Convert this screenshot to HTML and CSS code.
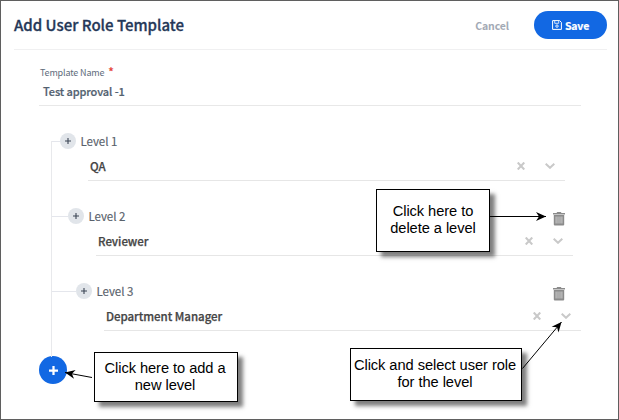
FILE: index.html
```html
<!DOCTYPE html>
<html lang="en">
<head>
<meta charset="utf-8">
<title>Add User Role Template</title>
<link rel="stylesheet" href="styles.css">
</head>
<body>
<svg class="sprite" aria-hidden="true">
  <symbol id="trash" viewBox="0 0 12 14"><path fill="#8b8b8b" d="M0 1h3.500l.7-1h3.600l.7 1H12v1.500H0z"/><path fill="#8b8b8b" d="M.8 3h10.400v9.500q0 1-1 1H1.800q-1 0-1-1z"/><path fill="#c4c4c4" d="M2.500 4.500h1.200v7H2.500zM4.400 4.500h1.200v7H4.400zM6.400 4.500h1.200v7H6.400zM8.300 4.500h1.200v7H8.300z"/></symbol>
  <symbol id="clear" viewBox="0 0 8 8"><path d="M.7.5l6.600 7M7.300.5L.7 7.500" fill="none" stroke="#c9c9c9" stroke-width="2.100"/></symbol>
  <symbol id="chevron" viewBox="0 0 10 6"><path d="M.7.800l4.300 4L9.300.8" fill="none" stroke="#c9c9c9" stroke-width="2"/></symbol>
  <symbol id="plus" viewBox="0 0 8 8"><path d="M4 1v6M1 4h6" fill="none" stroke="currentColor" stroke-width="1.100"/></symbol>
</svg>
<main class="panel">
  <header class="header">
    <h1 class="title">Add User Role Template</h1>
    <div class="actions">
      <span class="cancel">Cancel</span>
      <button class="save">
        <svg class="disk" viewBox="0 0 10 10"><path d="M.6.6h7l1.800 1.800v7H.6z" fill="none" stroke="#fff" stroke-width="1"/><path d="M2.700.8v2.500h4V.8" fill="none" stroke="#fff" stroke-width=".8"/><circle cx="5" cy="6.100" r="1.200" fill="none" stroke="#fff" stroke-width=".9"/></svg>
        <span class="save-text">Save</span>
      </button>
    </div>
  </header>
  <section class="field">
    <label class="field-label">Template Name<span class="required">*</span></label>
    <div class="field-value">Test approval -1</div>
  </section>
  <section class="tree">
    <div class="level level-1">
      <div class="level-head"><span class="node"><svg><use href="#plus"/></svg></span><span class="level-name">Level 1</span></div>
      <div class="select"><span class="role">QA</span><svg class="clear"><use href="#clear"/></svg><svg class="chevron"><use href="#chevron"/></svg></div>
    </div>
    <div class="level level-2">
      <div class="level-head"><span class="node"><svg><use href="#plus"/></svg></span><span class="level-name">Level 2</span><svg class="trash"><use href="#trash"/></svg></div>
      <div class="select"><span class="role">Reviewer</span><svg class="clear"><use href="#clear"/></svg><svg class="chevron"><use href="#chevron"/></svg></div>
    </div>
    <div class="level level-3">
      <div class="level-head"><span class="node"><svg><use href="#plus"/></svg></span><span class="level-name">Level 3</span><svg class="trash"><use href="#trash"/></svg></div>
      <div class="select"><span class="role">Department Manager</span><svg class="clear"><use href="#clear"/></svg><svg class="chevron"><use href="#chevron"/></svg></div>
    </div>
  </section>
  <button class="add"><svg viewBox="0 0 8 8"><path d="M4 0v8M0 4h8" stroke="#fff" stroke-width="2"/></svg></button>
</main>
<div class="callout callout-delete">Click here to<br>delete a level</div>
<div class="callout callout-add">Click here to add a<br>new level</div>
<div class="callout callout-select">Click and select user role<br>for the level</div>
<svg class="arrows" viewBox="0 0 619 420">
  <defs><marker id="head" viewBox="0 0 10 10" refX="10" refY="5" markerWidth="10" markerHeight="10" markerUnits="userSpaceOnUse" orient="auto"><path d="M0 .5L10 5 0 9.500 3 5z"/></marker></defs>
  <g stroke="#000" stroke-width="1">
    <path d="M489 216.500H546" marker-end="url(#head)"/>
    <path d="M92 377.500L65 372.500" marker-end="url(#head)"/>
    <path d="M522.500 368.500L561.500 322" marker-end="url(#head)"/>
  </g>
</svg>
</body>
</html>
```

FILE: styles.css
```css
* { box-sizing: border-box; }
body {
  margin: 0;
  width: 619px;
  height: 420px;
  position: relative;
  overflow: hidden;
  background: #fff;
  font-family: "Noto Sans CJK JP", "Noto Sans", sans-serif;
}
.sprite { position: absolute; width: 0; height: 0; }
.panel { height: 420px; border: 1px solid #5f5f5f; }
.header {
  height: 49px;
  margin: 0 11px 0 13px;
  border-bottom: 1px solid #f0f0f1;
  display: flex;
  justify-content: space-between;
  align-items: center;
}
.title { margin: 0; font-size: 15px; line-height: 20px; font-weight: 500; color: #253858; white-space: nowrap; -webkit-text-stroke: .3px; }
.actions { display: flex; align-items: center; gap: 25px; }
.cancel { font-size: 10.5px; letter-spacing: -.1px; font-weight: 700; color: #a3aab5; }
.save {
  width: 73px;
  height: 28px;
  padding: 0;
  border: 0;
  border-radius: 14px;
  background: #1268e3;
  color: #fff;
  font: 700 10.5px "Noto Sans CJK JP", sans-serif;
  display: flex;
  align-items: center;
  justify-content: center;
  gap: 3px;
}
.save-text { letter-spacing: -.15px; -webkit-text-stroke: .2px; }
.disk { width: 10px; height: 10px; }
.field { margin: 14px 37px 0 38px; height: 42px; border-bottom: 1px solid #e8e8e8; }
.field-label { display: block; height: 16px; padding: 1px 0 0 1px; font-size: 9px; letter-spacing: -.15px; line-height: 16px; color: #5e6c7b; }
.required { color: #e5483d; margin-left: 4px; font-size: 11px; line-height: 1; font-weight: 700; }
.field-value { padding-left: 4px; font-size: 11px; letter-spacing: -.1px; line-height: 20px; margin-top: 1px; font-weight: 500; color: #52616f; -webkit-text-stroke: .2px; }
.tree { position: relative; margin: 23px 0 0 50px; height: 227px; }
.tree::before { content: ""; position: absolute; left: 0; top: 12px; width: 1px; height: 216px; background: #e8e9ec; }
.level { height: 75px; }
.level-head { height: 24px; display: flex; align-items: center; }
.level-head::before { content: ""; height: 1px; background: #e4e6ec; margin-top: 1px; width: 9px; }
.level-2 .level-head::before { width: 17px; }
.level-3 .level-head::before { width: 25px; }
.node { width: 16px; height: 16px; border-radius: 50%; background: #e1e5ea; color: #3c4654; display: flex; align-items: center; justify-content: center; }
.node svg { width: 8px; height: 8px; }
.level-name { margin-left: 4.500px; font-size: 11.500px; letter-spacing: -.05px; line-height: 20px; color: #59616b; -webkit-text-stroke: .15px; }
.trash { width: 12px; height: 14px; margin: 5px 53px 0 auto; }
.select { width: 477px; height: 28px; margin-left: 37px; border-bottom: 1px solid #e6e6e6; display: flex; align-items: center; padding: 0 10px 2px 2px; }
.level-2 .select { margin-left: 45px; }
.level-3 .select { margin-left: 53px; }
.role { flex: 1; font-size: 11.500px; letter-spacing: -.03px; line-height: 20px; font-weight: 500; color: #454545; -webkit-text-stroke: .25px; }
.clear { width: 8px; height: 8px; margin-right: 20px; }
.chevron { width: 10px; height: 6px; }
.add { margin: 0 0 0 38px; width: 28px; height: 28px; padding: 0; border: 0; border-radius: 50%; background: #1268e3; display: flex; align-items: center; justify-content: center; }
.add svg { width: 9px; height: 9px; }
.callout {
  position: absolute;
  display: flex;
  align-items: center;
  justify-content: center;
  padding: 0 2px 1px 0;
  border: 1px solid #000;
  background: #fff;
  box-shadow: 5px 5px 4px rgba(0, 0, 0, .5);
  font: 14.67px/17px "Liberation Sans", Arial, sans-serif;
  letter-spacing: -.06px;
  text-align: center;
  white-space: nowrap;
  color: #000;
}
.callout-delete { left: 376px; top: 189px; width: 114px; height: 63px; padding-right: 0; }
.callout-add { left: 94px; top: 352px; width: 144px; height: 50px; }
.callout-select { left: 350px; top: 348px; width: 172px; height: 53px; }
.arrows { position: absolute; left: 0; top: 0; width: 619px; height: 420px; }
```
